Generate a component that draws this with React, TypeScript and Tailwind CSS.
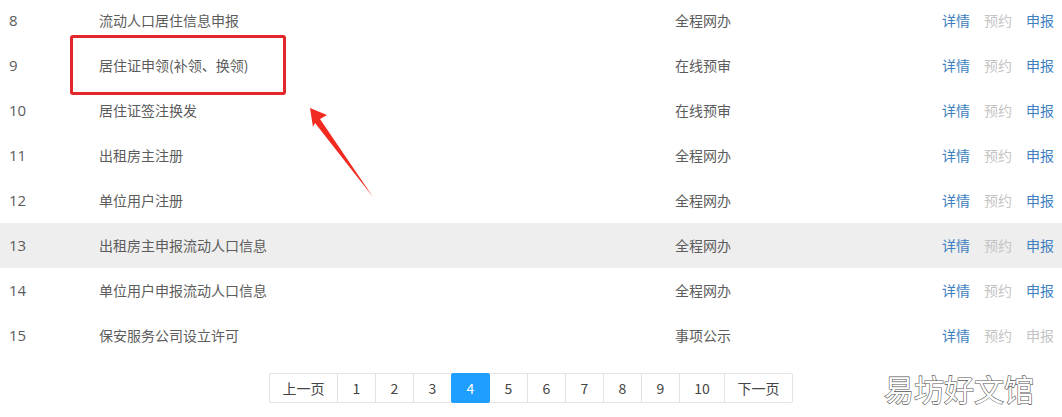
import React from 'react';

interface Item {
  no: number;
  name: string;
  mode: string;
  canApply: boolean;
}

const items: Item[] = [
  { no: 8, name: '流动人口居住信息申报', mode: '全程网办', canApply: true },
  { no: 9, name: '居住证申领(补领、换领)', mode: '在线预审', canApply: true },
  { no: 10, name: '居住证签注换发', mode: '在线预审', canApply: true },
  { no: 11, name: '出租房主注册', mode: '全程网办', canApply: true },
  { no: 12, name: '单位用户注册', mode: '全程网办', canApply: true },
  { no: 13, name: '出租房主申报流动人口信息', mode: '全程网办', canApply: true },
  { no: 14, name: '单位用户申报流动人口信息', mode: '全程网办', canApply: true },
  { no: 15, name: '保安服务公司设立许可', mode: '事项公示', canApply: false },
];

const pages = ['上一页', '1', '2', '3', '4', '5', '6', '7', '8', '9', '10', '下一页'];

function Row({ item }: { item: Item }) {
  const hovered = item.no === 13;
  return (
    <div
      className={`grid h-[45px] grid-cols-[99px_576px_1fr_auto] items-center text-[14px] text-[#5c5c5c] ${
        hovered ? 'bg-[#eeeeee]' : 'bg-white'
      }`}
    >
      <span className="pl-[9px] font-['Open_Sans',sans-serif] text-[15px]">{item.no}</span>
      <span>{item.name}</span>
      <span>{item.mode}</span>
      <div className="flex gap-[14px] pr-[8px]">
        <a className="cursor-pointer text-[#3d7fbf]">详情</a>
        <span className="text-[#c4c4c4]">预约</span>
        <a className={item.canApply ? 'cursor-pointer text-[#3d7fbf]' : 'text-[#c4c4c4]'}>申报</a>
      </div>
    </div>
  );
}

function Pager() {
  return (
    <div className="flex justify-center pt-[15px]">
      <div className="flex">
        {pages.map((p, i) => {
          const active = p === '4';
          return (
            <span
              key={i}
              className={`-ml-px flex h-[30px] items-center justify-center border text-[14px] first:ml-0 ${
                p.length > 2 ? 'w-[69px]' : p.length === 2 ? 'w-[46px]' : 'w-[39px]'
              } ${
                active
                  ? 'relative z-10 rounded-[2px] border-[#1e9fff] bg-[#1e9fff] text-white'
                  : 'border-[#e2e2e2] bg-white text-[#444]'
              } ${i === 0 ? 'rounded-l-[2px]' : ''} ${i === pages.length - 1 ? 'rounded-r-[2px]' : ''}`}
            >
              {p}
            </span>
          );
        })}
      </div>
    </div>
  );
}

export default function App() {
  return (
    <div
      className="relative h-[417px] w-[1062px] overflow-hidden bg-white"
      style={{ fontFamily: '"Microsoft YaHei", "Noto Sans CJK SC", "Noto Sans", sans-serif' }}
    >
      <div className="-mt-[2px]">
        {items.map((it) => (
          <Row key={it.no} item={it} />
        ))}
      </div>
      <Pager />

      {/* annotation box */}
      <div className="pointer-events-none absolute left-[70px] top-[35px] h-[60px] w-[216px] rounded-[3px] border-[3px] border-[#e3262a]" />

      {/* annotation arrow */}
      <svg className="pointer-events-none absolute left-0 top-0" width="1062" height="417">
        <polygon
          points="310,108 327,115 320,119 373,197 315,123 313,127"
          fill="#f22a1f"
        />
      </svg>

      {/* watermark */}
      <div className="pointer-events-none absolute left-[884px] top-[370px] text-[30px] leading-[36px] text-white [-webkit-text-stroke:1.2px_#555] [paint-order:stroke_fill]">
        易坊好文馆
      </div>
    </div>
  );
}
